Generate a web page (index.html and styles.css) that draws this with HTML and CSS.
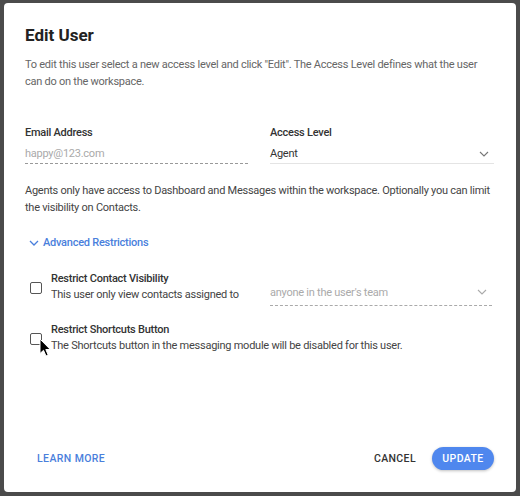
FILE: index.html
```html
<!DOCTYPE html>
<html>
<head>
<meta charset="utf-8">
<link rel="stylesheet" href="styles.css">
</head>
<body>
<div class="dialog">
  <h1 class="title">Edit User</h1>
  <p class="desc">To edit this user select a new access level and click "Edit". The Access Level defines what the user can do on the workspace.</p>
  <div class="fields">
    <div class="field">
      <div class="label">Email Address</div>
      <div class="value disabled">happy@123.com</div>
    </div>
    <div class="field">
      <div class="label">Access Level</div>
      <div class="value select">
        <span>Agent</span>
        <svg class="chev" width="10" height="6" viewBox="0 0 10 6"><path d="M1 1 L5 5 L9 1" fill="none" stroke="#777" stroke-width="1.1"/></svg>
      </div>
    </div>
  </div>
  <p class="desc para">Agents only have access to Dashboard and Messages within the workspace. Optionally you can limit the visibility on Contacts.</p>
  <div class="advanced">
    <svg width="10" height="6" viewBox="0 0 10 6"><path d="M1 1 L5 5 L9 1" fill="none" stroke="#4a7fdc" stroke-width="1.3"/></svg>
    <span>Advanced Restrictions</span>
  </div>
  <div class="option first">
    <div class="opt-left">
      <span class="checkbox"></span>
      <div class="opt-text">
        <div class="opt-title">Restrict Contact Visibility</div>
        <div class="opt-sub">This user only view contacts assigned to</div>
      </div>
    </div>
    <div class="opt-select">
      <span>anyone in the user's team</span>
      <svg class="chev" width="10" height="6" viewBox="0 0 10 6"><path d="M1 1 L5 5 L9 1" fill="none" stroke="#aaa" stroke-width="1.1"/></svg>
    </div>
  </div>
  <div class="option second">
    <div class="opt-left">
      <span class="checkbox"></span>
      <div class="opt-text">
        <div class="opt-title">Restrict Shortcuts Button</div>
        <div class="opt-sub nowrap">The Shortcuts button in the messaging module will be disabled for this user.</div>
      </div>
    </div>
  </div>
  <div class="footer">
    <button class="btn text-btn">LEARN MORE</button>
    <div class="actions">
      <button class="btn cancel">CANCEL</button>
      <button class="btn primary">UPDATE</button>
    </div>
  </div>
</div>
<svg class="cursor" width="13" height="20" viewBox="0 0 13 20"><path d="M1 1 L1 15.5 L4.5 12.3 L7 18 L9.2 17 L6.8 11.5 L11.3 11.5 Z" fill="#000" stroke="#fff" stroke-width="1" stroke-linejoin="round"/></svg>
</body>
</html>
```
FILE: styles.css
```css
html, body {
  margin: 0;
  padding: 0;
}
body {
  background: #4b4b4b;
  font-family: Roboto, "Liberation Sans", sans-serif;
  width: 520px;
  height: 496px;
  overflow: hidden;
  position: relative;
}
.dialog {
  margin: 3px 0 0 4px;
  width: 512px;
  height: 489px;
  box-sizing: border-box;
  background: #fff;
  border-radius: 4px;
  padding: 21px 22px 22px 21px;
  display: flex;
  flex-direction: column;
  letter-spacing: -0.25px;
}
.title {
  margin: 0;
  font-size: 17px;
  line-height: 22px;
  font-weight: 700;
  color: #222;
  letter-spacing: 0;
}
.desc {
  margin: 10px 0 0;
  font-size: 11px;
  line-height: 17px;
  color: #666;
}
.fields {
  margin-top: 34px;
  display: grid;
  grid-template-columns: 223px 224px;
  column-gap: 22px;
}
.label {
  font-size: 11px;
  line-height: 17px;
  font-weight: 500;
  color: #333;
}
.value {
  margin-top: 4px;
  height: 18px;
  box-sizing: content-box;
  font-size: 11px;
  line-height: 17px;
  color: #333;
  border-bottom: 1px solid #e4e4e4;
}
.value.disabled {
  color: #aaa;
  border-bottom: 1px dashed #999;
}
.select {
  display: flex;
  justify-content: space-between;
}
.chev {
  margin: 6px 5px 0 0;
}
.para {
  margin-top: 18px;
  color: #444;
}
.advanced {
  margin-top: 18px;
  display: flex;
  align-items: center;
  gap: 4px;
  padding-left: 4px;
  font-size: 11px;
  line-height: 17px;
  font-weight: 500;
  color: #4a7fdc;
}
.advanced svg {
  margin-top: 1px;
}
.option {
  display: grid;
  grid-template-columns: 223px 222px;
  column-gap: 22px;
}
.option.first {
  margin-top: 20px;
}
.option.second {
  margin-top: 19px;
}
.opt-left {
  display: flex;
}
.checkbox {
  flex: none;
  width: 10px;
  height: 10px;
  border: 1.5px solid #555;
  border-radius: 2px;
  margin: 11px 9px 0 5px;
}
.opt-text {
  font-size: 11px;
  line-height: 16px;
}
.opt-title {
  font-weight: 500;
  color: #333;
}
.opt-sub {
  color: #444;
}
.nowrap {
  white-space: nowrap;
}
.opt-select {
  align-self: end;
  height: 19px;
  display: flex;
  justify-content: space-between;
  font-size: 11px;
  line-height: 14px;
  color: #aaa;
  border-bottom: 1px dashed #aaa;
  margin-bottom: -3px;
}
.opt-select .chev {
  margin-top: 3px;
}
.footer {
  margin-top: auto;
  display: flex;
  justify-content: space-between;
  align-items: center;
}
.btn {
  font-family: Roboto, "Liberation Sans", sans-serif;
  font-size: 10.5px;
  font-weight: 500;
  letter-spacing: 0.4px;
  border: none;
  background: none;
  padding: 0 8px;
  height: 23px;
  cursor: pointer;
}
.text-btn {
  color: #4a7fdc;
  padding-left: 12px;
}
.actions {
  display: flex;
  gap: 8px;
  align-items: center;
}
.cancel {
  color: #333;
}
.primary {
  background: #4f87ee;
  color: #fff;
  border-radius: 12px;
  width: 62px;
  padding: 0;
  box-shadow: 0 1px 3px rgba(0,0,0,0.25);
}
.cursor {
  position: absolute;
  left: 39px;
  top: 338px;
}
```
